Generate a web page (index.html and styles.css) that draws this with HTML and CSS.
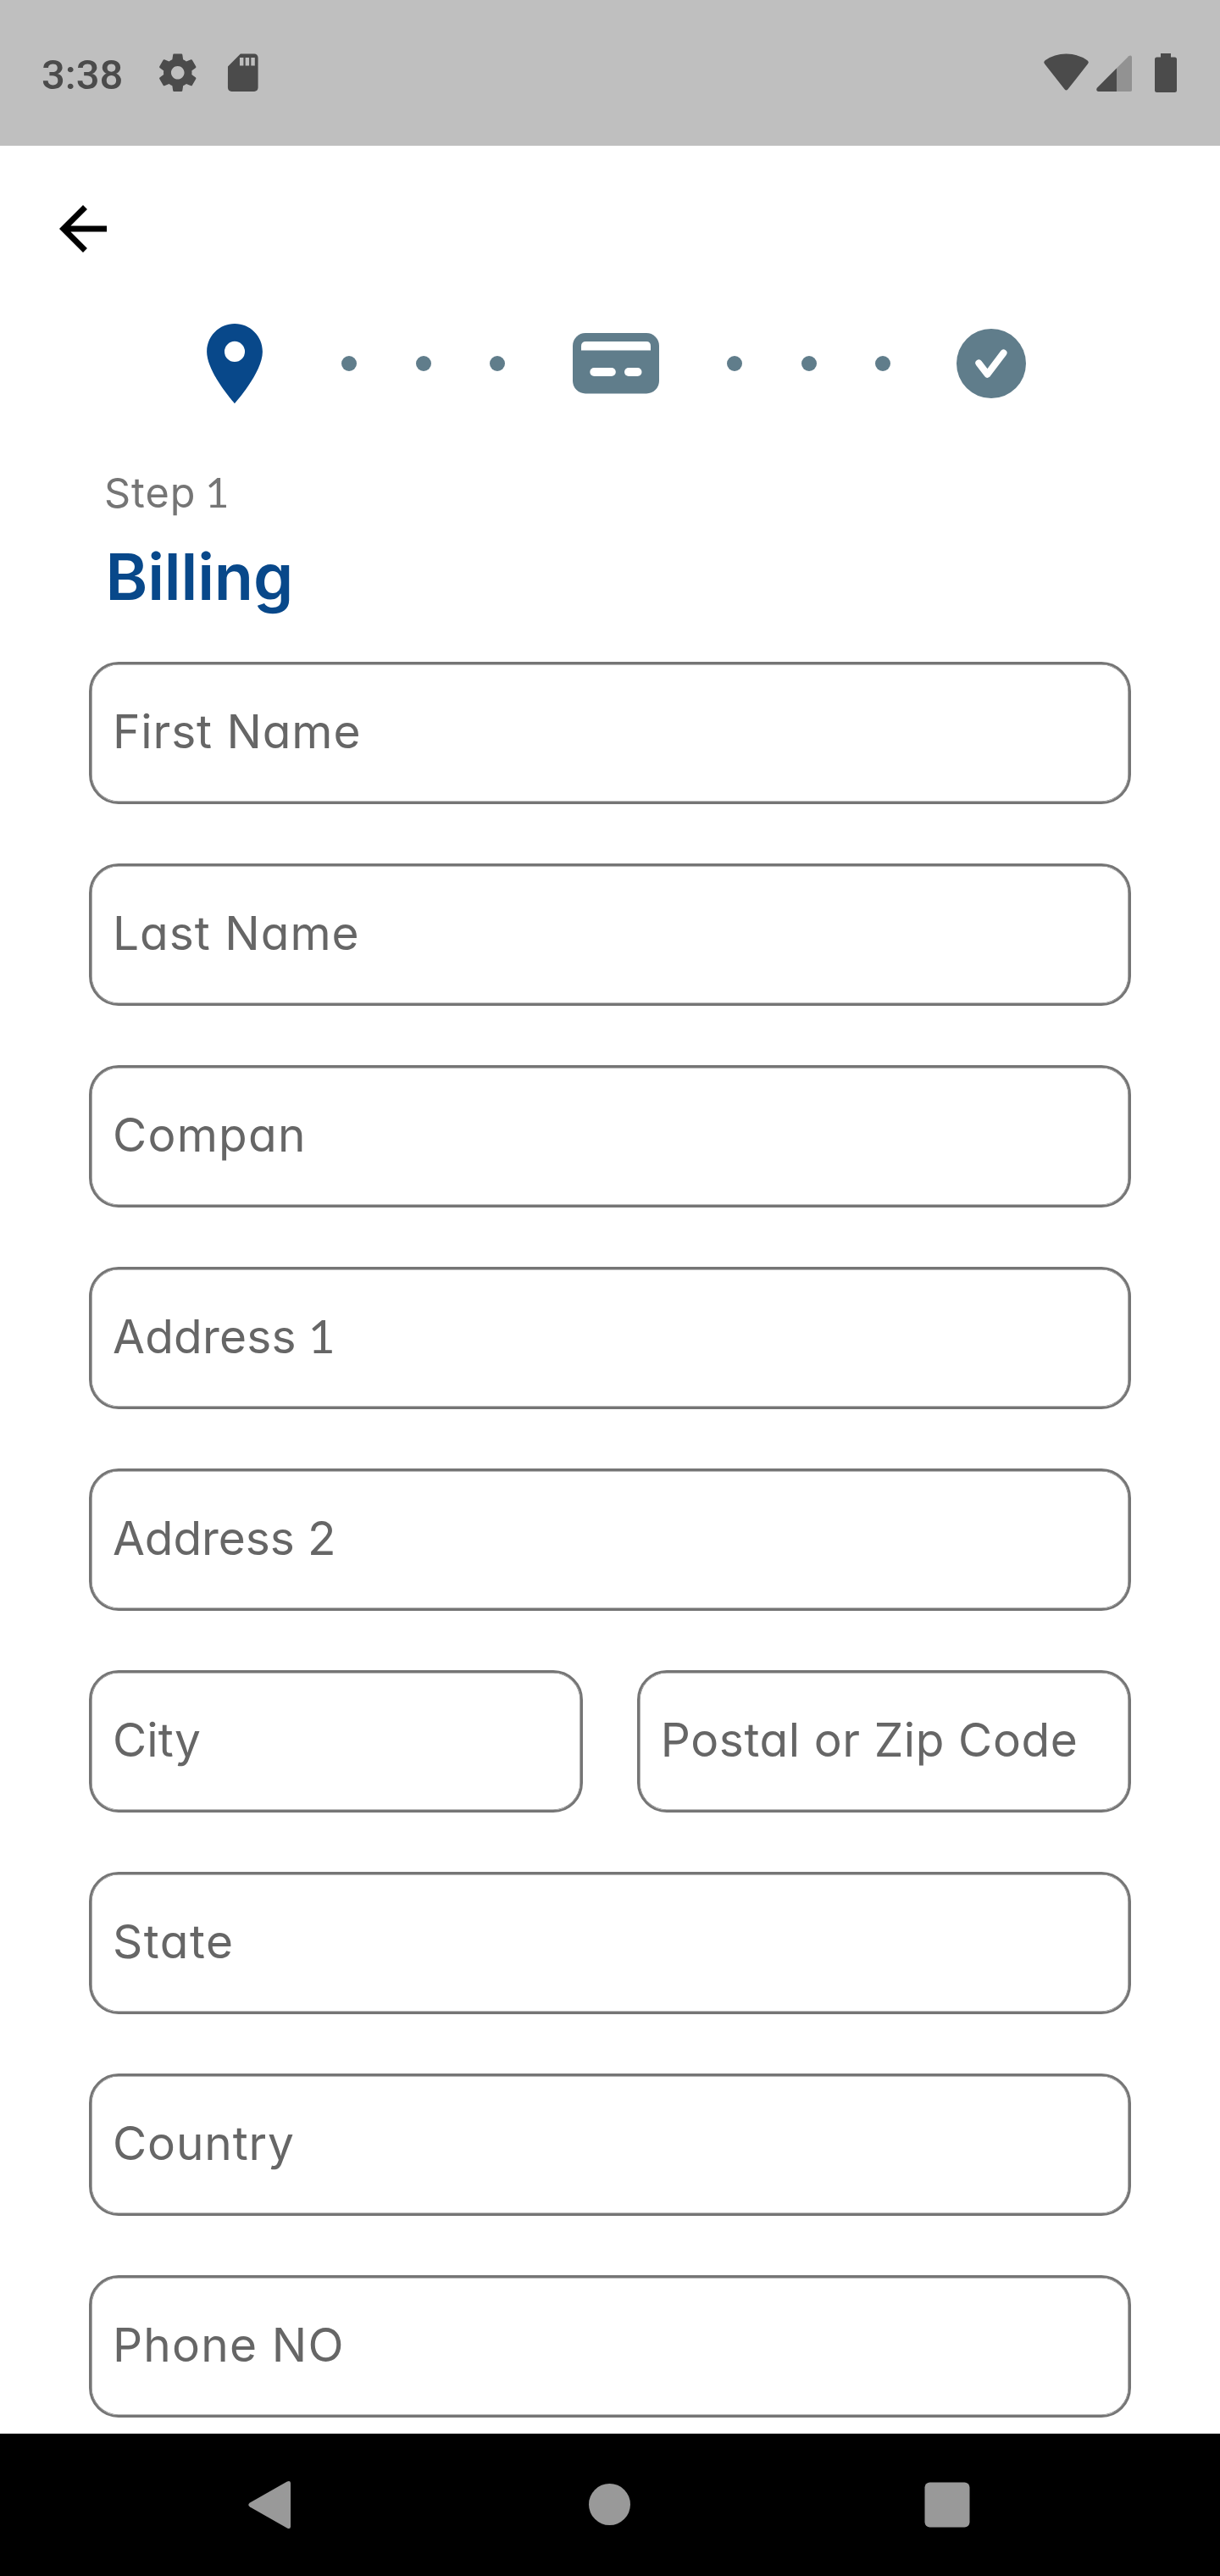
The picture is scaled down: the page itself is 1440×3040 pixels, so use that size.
FILE: index.html
```html
<!DOCTYPE html>
<html lang="en">
<head>
<meta charset="utf-8">
<title>Billing</title>
<link rel="stylesheet" href="styles.css">
</head>
<body>
<div class="screen">
  <header class="status">
    <span class="clock">3:38</span>
    <svg class="gear" viewBox="0 0 24 24"><path d="M19.43 12.98c.04-.32.07-.64.07-.98s-.03-.66-.07-.98l2.11-1.65c.19-.15.24-.42.12-.64l-2-3.46c-.12-.22-.39-.3-.61-.22l-2.49 1c-.52-.4-1.08-.73-1.69-.98l-.38-2.65C14.46 2.18 14.25 2 14 2h-4c-.25 0-.46.18-.49.42l-.38 2.65c-.61.25-1.17.59-1.69.98l-2.49-1c-.23-.09-.49 0-.61.22l-2 3.46c-.13.22-.07.49.12.64l2.11 1.65c-.04.32-.07.65-.07.98s.03.66.07.98l-2.11 1.65c-.19.15-.24.42-.12.64l2 3.46c.12.22.39.3.61.22l2.49-1c.52.4 1.08.73 1.69.98l.38 2.65c.03.24.24.42.49.42h4c.25 0 .46-.18.49-.42l.38-2.65c.61-.25 1.17-.59 1.69-.98l2.49 1c.23.09.49 0 .61-.22l2-3.46c.12-.22.07-.49-.12-.64l-2.11-1.65zM12 15.5c-1.93 0-3.5-1.57-3.5-3.5s1.57-3.5 3.5-3.5 3.5 1.57 3.5 3.5-1.57 3.5-3.5 3.5z"/></svg>
    <svg class="sd" viewBox="0 0 24 24"><path d="M18 2h-7.300L4.020 8.700 4 20c0 1.100.9 2 2 2h12c1.100 0 2-.9 2-2V4c0-1.100-.9-2-2-2zm-5.700 6.300h-2V4h2v4.300zm3 0h-2V4h2v4.300zm3 0h-2V4h2v4.300z"/></svg>
    <svg class="signals" viewBox="0 0 160 50">
      <path d="M3.300 14.800Q1 12.300 3.600 10.200Q14.500 2.500 28.500 2.500T53.400 10.200Q56 12.300 53.700 14.800L30.300 44.500Q28.500 46.500 26.700 44.500Z"/>
      <path class="faint" d="M88 19.500L102.300 5.200Q104.700 3.500 106 6V45.500Q106 47 103.500 47H88Z"/>
      <path d="M88 19.500V47H66.500Q63 46 64.800 42.700Z"/>
      <path d="M140 2H152V6.500H156.500Q159 6.500 159 9V45.500Q159 48 156.500 48H135.500Q133 48 133 45.500V9Q133 6.500 135.500 6.500H140Z"/>
    </svg>
  </header>
  <nav class="toolbar">
    <svg class="back" viewBox="0 0 24 24"><path d="M20 11H7.830l5.590-5.590L12 4l-8 8 8 8 1.410-1.410L7.830 13H20v-2z"/></svg>
  </nav>
  <div class="stepper">
    <svg class="pin" viewBox="5 2 14 20"><path d="M12 2C8.130 2 5 5.130 5 9c0 5.250 7 13 7 13s7-7.750 7-13c0-3.870-3.130-7-7-7zm0 9.560a2.560 2.560 0 1 1 0-5.120 2.560 2.560 0 0 1 0 5.120z"/></svg>
    <div class="dots before"><i></i><i></i><i></i></div>
    <svg class="card" viewBox="0 0 102 72">
      <rect width="102" height="71.500" rx="15"/>
      <path class="cut" d="M10 20.500V15.500Q10 10 15.500 10H87Q92 10 92 15.500V20.500Z"/>
      <rect class="cut" x="20.300" y="41" width="30.500" height="10" rx="5"/>
      <rect class="cut" x="61" y="41" width="20.500" height="10" rx="5"/>
    </svg>
    <div class="dots after"><i></i><i></i><i></i></div>
    <svg class="done" viewBox="0 0 82 82"><circle cx="41" cy="41" r="41"/><path class="tick" d="M26.300 40.500L36.500 53.700L55.500 28.500"/></svg>
  </div>
  <main class="form">
    <p class="step">Step <span class="one">1</span></p>
    <h1>Billing</h1>
    <div class="fields">
      <div class="field first">First Name</div>
      <div class="field last">Last Name</div>
      <div class="field company">Compan</div>
      <div class="field address1">Address <span class="one">1</span></div>
      <div class="field address2">Address 2</div>
      <div class="pair">
        <div class="field city">City</div>
        <div class="field postal">Postal or Zip Code</div>
      </div>
      <div class="field state">State</div>
      <div class="field country">Country</div>
      <div class="field phone">Phone NO</div>
    </div>
  </main>
  <footer class="navbar">
    <svg viewBox="0 0 60 60"><path d="M7 27.500L50.500 2.800Q55 .500 55 4.500V55.500Q55 59.500 50.500 57.200L7 32.500Q3.500 30 7 27.500Z"/></svg>
    <svg viewBox="0 0 60 60"><circle cx="31.500" cy="29.500" r="24.500"/></svg>
    <svg viewBox="0 0 60 60"><rect x="3.500" y="3.500" width="53" height="53" rx="6"/></svg>
  </footer>
</div>
</body>
</html>
```
FILE: styles.css
```css
* { box-sizing: border-box; }
body { margin: 0; }
.screen {
  width: 1440px;
  height: 3040px;
  display: flex;
  flex-direction: column;
  background: #fff;
  font-family: Inter, "Noto Sans", sans-serif;
  font-feature-settings: "cv11";
  overflow: hidden;
}
svg { display: block; flex: none; }

.status {
  height: 172px;
  padding: 0 50px 0 49px;
  display: flex;
  align-items: center;
  background: #bfbfbf;
  fill: #4b4b4b;
}
.clock {
  width: 134px;
  padding-top: 4px;
  font: 500 49px Roboto, sans-serif;
  color: #4b4b4b;
}
.gear { width: 53.500px; height: 53.500px; margin-right: 23px; }
.sd { width: 53.500px; height: 53.500px; }
.signals { width: 160px; height: 50px; margin-left: auto; }
.faint { fill: #929292; }

.toolbar { height: 182px; padding: 56px; }
.back { width: 84px; height: 84px; }

.stepper {
  height: 150px;
  padding-left: 244px;
  display: flex;
  align-items: center;
  fill: #607d8b;
}
.pin { width: 66px; height: 94px; fill: #08488a; }
.dots { display: flex; gap: 69.500px; }
.before { margin: 0 80px 0 93px; }
.after { margin: 0 78px 0 80px; }
.dots i { width: 18px; height: 18px; border-radius: 50%; background: #607d8b; }
.card { width: 102px; height: 72px; }
.done { width: 82px; height: 82px; }
.cut { fill: #fff; }
.tick { fill: none; stroke: #fff; stroke-width: 8; stroke-linecap: round; stroke-linejoin: round; }

.form { flex: 1; padding: 48px 105px 0; }
.step {
  margin: 0 0 24px 18px;
  font-size: 48.500px;
  line-height: 60px;
  letter-spacing: 1px;
  color: #757575;
}
.one { font-family: Lato, sans-serif; line-height: 0; margin-left: -1.500px; }
.step .one { margin-left: -4px; }
h1 {
  margin: 0 0 55px 19.500px;
  font-size: 75.600px;
  font-weight: 600;
  line-height: 90px;
  letter-spacing: -.130px;
  color: #08488a;
}
.fields { display: flex; flex-direction: column; gap: 70px; }
.pair { display: grid; grid-template-columns: 1fr 1fr; gap: 63.500px; }
.field {
  height: 168px;
  padding-left: 25px;
  border: 3px solid #757575;
  border-radius: 35px;
  box-shadow: inset 0 0 0 .600px #757575;
  font-size: 55px;
  line-height: 158px;
  color: #666;
  white-space: nowrap;
}
.first { letter-spacing: .900px; }
.last { letter-spacing: 1px; }
.company { letter-spacing: 1.250px; }
.address1 { letter-spacing: .200px; }
.address2 { letter-spacing: -.090px; }
.city { letter-spacing: .150px; }
.postal { letter-spacing: .600px; }
.state { letter-spacing: 1.500px; }
.country { letter-spacing: .880px; }
.phone { letter-spacing: 1.200px; }

.navbar {
  height: 168px;
  padding: 0 292px 0 288px;
  display: flex;
  align-items: center;
  justify-content: space-between;
  background: #000;
  fill: #999;
}
.navbar svg { width: 60px; height: 60px; }
```
